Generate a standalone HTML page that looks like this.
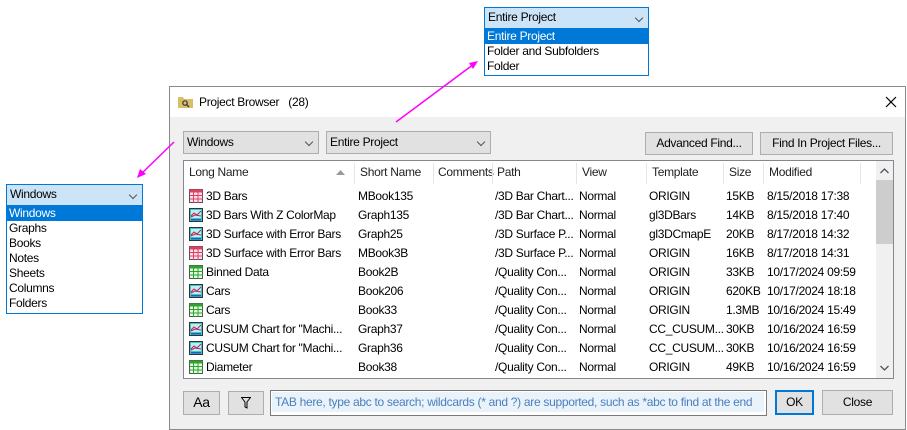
<!DOCTYPE html>
<html><head><meta charset="utf-8"><style>
*{margin:0;padding:0;box-sizing:border-box}
body{width:907px;height:430px;background:#fff;position:relative;overflow:hidden;font-family:"Liberation Sans",sans-serif;font-size:12px;color:#000;letter-spacing:-0.3px}
.a{position:absolute;white-space:nowrap}
.dlg{position:absolute;left:169px;top:86px;width:737px;height:344px;border:1px solid #8a8a8a;background:#f0f0f0}
.tb{position:absolute;left:0;top:0;right:0;height:30px;background:#fff}
.btn{position:absolute;background:#e1e1e1;border:1px solid #adadad;text-align:center;line-height:21px}
.cb{position:absolute;background:#e1e1e1;border:1px solid #adadad;line-height:21px;padding-left:3px}
.chev{position:absolute;right:6px;top:7px;width:6px;height:6px;border-right:1px solid #555;border-bottom:1px solid #555;transform:rotate(45deg)}
.list{position:absolute;left:13px;top:73px;width:711px;height:219px;background:#fff;border:1px solid #828790}
.hd{position:absolute;top:0;height:23px;line-height:23px;color:#222}
.sep{position:absolute;top:2px;width:1px;height:21px;background:#e5e5e5}
.row{position:absolute;left:0;height:19px;line-height:19px;width:690px}
.row span{position:absolute}
.ic{position:absolute;left:5px;top:2px;width:14px;height:14px}
.pop{position:absolute;border:1px solid #0078d7;background:#fff}
.ph{position:absolute;background:#cce4f7;border:1px solid #0078d7;line-height:19px;padding-left:3px}
.pi{height:15px;line-height:15px;padding-left:2px}
.sel{background:#0078d7;color:#fff}
</style></head><body>

<div class="pop" style="left:484px;top:7px;width:165px;height:69px"></div>
<div class="ph" style="left:484px;top:7px;width:165px;height:22px">Entire Project<div class="chev"></div></div>
<div class="a" style="left:485px;top:29px;width:163px">
<div class="pi sel">Entire Project</div><div class="pi">Folder and Subfolders</div><div class="pi">Folder</div></div>

<div class="dlg">
<div class="tb">
<svg class="a" style="left:8px;top:8px" width="15" height="13"><path d="M0 2h5l1 2h9v9H0z" fill="#d8c06a"/><circle cx="7" cy="8" r="2.2" fill="none" stroke="#333" stroke-width="1.2"/><line x1="8.6" y1="9.6" x2="11" y2="12" stroke="#333" stroke-width="1.3"/></svg>
<div class="a" style="left:29px;top:8px">Project Browser&nbsp;&nbsp;&nbsp;(28)</div>
<svg class="a" style="left:715px;top:9px" width="12" height="12"><path d="M1 1L11 11M11 1L1 11" stroke="#000" stroke-width="1.2"/></svg>
</div>
<div class="cb" style="left:13px;top:44px;width:136px;height:23px">Windows<div class="chev"></div></div>
<div class="cb" style="left:156px;top:44px;width:165px;height:23px">Entire Project<div class="chev"></div></div>
<div class="btn" style="left:475px;top:45px;width:108px;height:23px">Advanced Find...</div>
<div class="btn" style="left:590px;top:45px;width:133px;height:23px">Find In Project Files...</div>

<div class="list">
<div class="hd" style="left:5px">Long Name</div>
<svg class="a" style="left:152px;top:9px" width="9" height="5"><path d="M0 5L4.5 0L9 5z" fill="#999"/></svg>
<div class="sep" style="left:170px"></div><div class="hd" style="left:176px">Short Name</div>
<div class="sep" style="left:249px"></div><div class="hd" style="left:254px">Comments</div>
<div class="sep" style="left:308px"></div><div class="hd" style="left:313px">Path</div>
<div class="sep" style="left:392px"></div><div class="hd" style="left:398px">View</div>
<div class="sep" style="left:462px"></div><div class="hd" style="left:468px">Template</div>
<div class="sep" style="left:539px"></div><div class="hd" style="left:545px">Size</div>
<div class="sep" style="left:579px"></div><div class="hd" style="left:585px">Modified</div>
<div class="sep" style="left:676px"></div>
<div class="a" style="left:692px;top:0;width:17px;height:217px;background:#f0f0f0"></div>
<div class="a" style="left:692px;top:19px;width:17px;height:64px;background:#cdcdcd"></div>
<svg class="a" style="left:696px;top:7px" width="9" height="6"><path d="M0.5 5L4.5 1L8.5 5" fill="none" stroke="#555" stroke-width="1.3"/></svg>
<svg class="a" style="left:696px;top:204px" width="9" height="6"><path d="M0.5 1L4.5 5L8.5 1" fill="none" stroke="#555" stroke-width="1.3"/></svg>
<div id="rows"></div>
</div>

<div class="btn" style="left:13px;top:304px;width:37px;height:24px;font-size:14px">Aa</div>
<div class="btn" style="left:58px;top:304px;width:36px;height:24px">
<svg style="margin-top:5px" width="10" height="12"><path d="M0.5 0.5h9L6 5v6L4 10V5z" fill="none" stroke="#000"/></svg></div>
<div class="a" style="left:100px;top:303px;width:497px;height:26px;background:#fff;border:1px solid #7a7a7a"></div>
<div class="a" style="left:102px;top:305px;width:492px;height:20px;background:#eaf2fa;line-height:20px;color:#4a7fbf;padding-left:3px;overflow:hidden">TAB here, type abc to search; wildcards (* and ?) are supported, such as *abc to find at the end</div>
<div class="btn" style="left:605px;top:303px;width:39px;height:25px;border:2px solid #0078d7;line-height:21px">OK</div>
<div class="btn" style="left:652px;top:303px;width:71px;height:25px;line-height:23px">Close</div>
</div>

<div class="pop" style="left:6px;top:184px;width:137px;height:130px"></div>
<div class="ph" style="left:6px;top:184px;width:137px;height:22px">Windows<div class="chev"></div></div>
<div class="a" style="left:7px;top:206px;width:135px">
<div class="pi sel">Windows</div><div class="pi">Graphs</div><div class="pi">Books</div><div class="pi">Notes</div><div class="pi">Sheets</div><div class="pi">Columns</div><div class="pi">Folders</div></div>

<svg class="a" style="left:0;top:0;z-index:10" width="907" height="430">
<line x1="396" y1="122" x2="474" y2="64" stroke="#ff00ff" stroke-width="1.5"/>
<polygon points="478,61 469,63 473,69" fill="#ff00ff"/>
<line x1="174" y1="142" x2="141" y2="174" stroke="#ff00ff" stroke-width="1.5"/>
<polygon points="137,178 140,169 146,174" fill="#ff00ff"/>
</svg>

<script>
var d=[["m","3D Bars","MBook135","/3D Bar Chart...","ORIGIN","15KB","8/15/2018 17:38"],
["g","3D Bars With Z ColorMap","Graph135","/3D Bar Chart...","gl3DBars","14KB","8/15/2018 17:40"],
["g","3D Surface with Error Bars","Graph25","/3D Surface P...","gl3DCmapE","20KB","8/17/2018 14:32"],
["m","3D Surface with Error Bars","MBook3B","/3D Surface P...","ORIGIN","16KB","8/17/2018 14:31"],
["b","Binned Data","Book2B","/Quality Con...","ORIGIN","33KB","10/17/2024 09:59"],
["g","Cars","Book206","/Quality Con...","ORIGIN","620KB","10/17/2024 18:18"],
["b","Cars","Book33","/Quality Con...","ORIGIN","1.3MB","10/16/2024 15:49"],
["g","CUSUM Chart for \"Machi...","Graph37","/Quality Con...","CC_CUSUM...","30KB","10/16/2024 16:59"],
["g","CUSUM Chart for \"Machi...","Graph36","/Quality Con...","CC_CUSUM...","30KB","10/16/2024 16:59"],
["b","Diameter","Book38","/Quality Con...","ORIGIN","49KB","10/16/2024 16:59"]];
function ic(t){
 if(t=="g")return '<svg class="ic" viewBox="0 0 14 14"><rect x=".5" y=".5" width="13" height="13" fill="#3fc7c7" stroke="#333"/><rect x="2" y="2" width="10" height="8" fill="#b9f0f0"/><path d="M2 8L5 5L8 7L12 3M2 9L6 7L12 8" stroke="#c02060" fill="none"/><rect x="2" y="11" width="10" height="1.5" fill="#2060c0"/></svg>';
 var c=t=="m"?"#e04060":"#30a030",f=t=="m"?"#fde":"#dfd";
 return '<svg class="ic" viewBox="0 0 14 14"><rect x=".5" y=".5" width="13" height="13" fill="'+f+'" stroke="#555"/><rect x=".5" y=".5" width="13" height="3" fill="'+c+'"/><path d="M4.5 1v13M9 1v13M1 6.5h13M1 10h13" stroke="'+c+'"/></svg>';}
var h="";d.forEach(function(r,i){h+='<div class="row" style="top:'+(26+i*19)+'px">'+ic(r[0])+'<span style="left:22px">'+r[1]+'</span><span style="left:174px">'+r[2]+'</span><span style="left:311px">'+r[3]+'</span><span style="left:395px">Normal</span><span style="left:465px">'+r[4]+'</span><span style="left:542px">'+r[5]+'</span><span style="left:583px">'+r[6]+'</span></div>';});
document.getElementById("rows").innerHTML=h;
</script>
</body></html>
